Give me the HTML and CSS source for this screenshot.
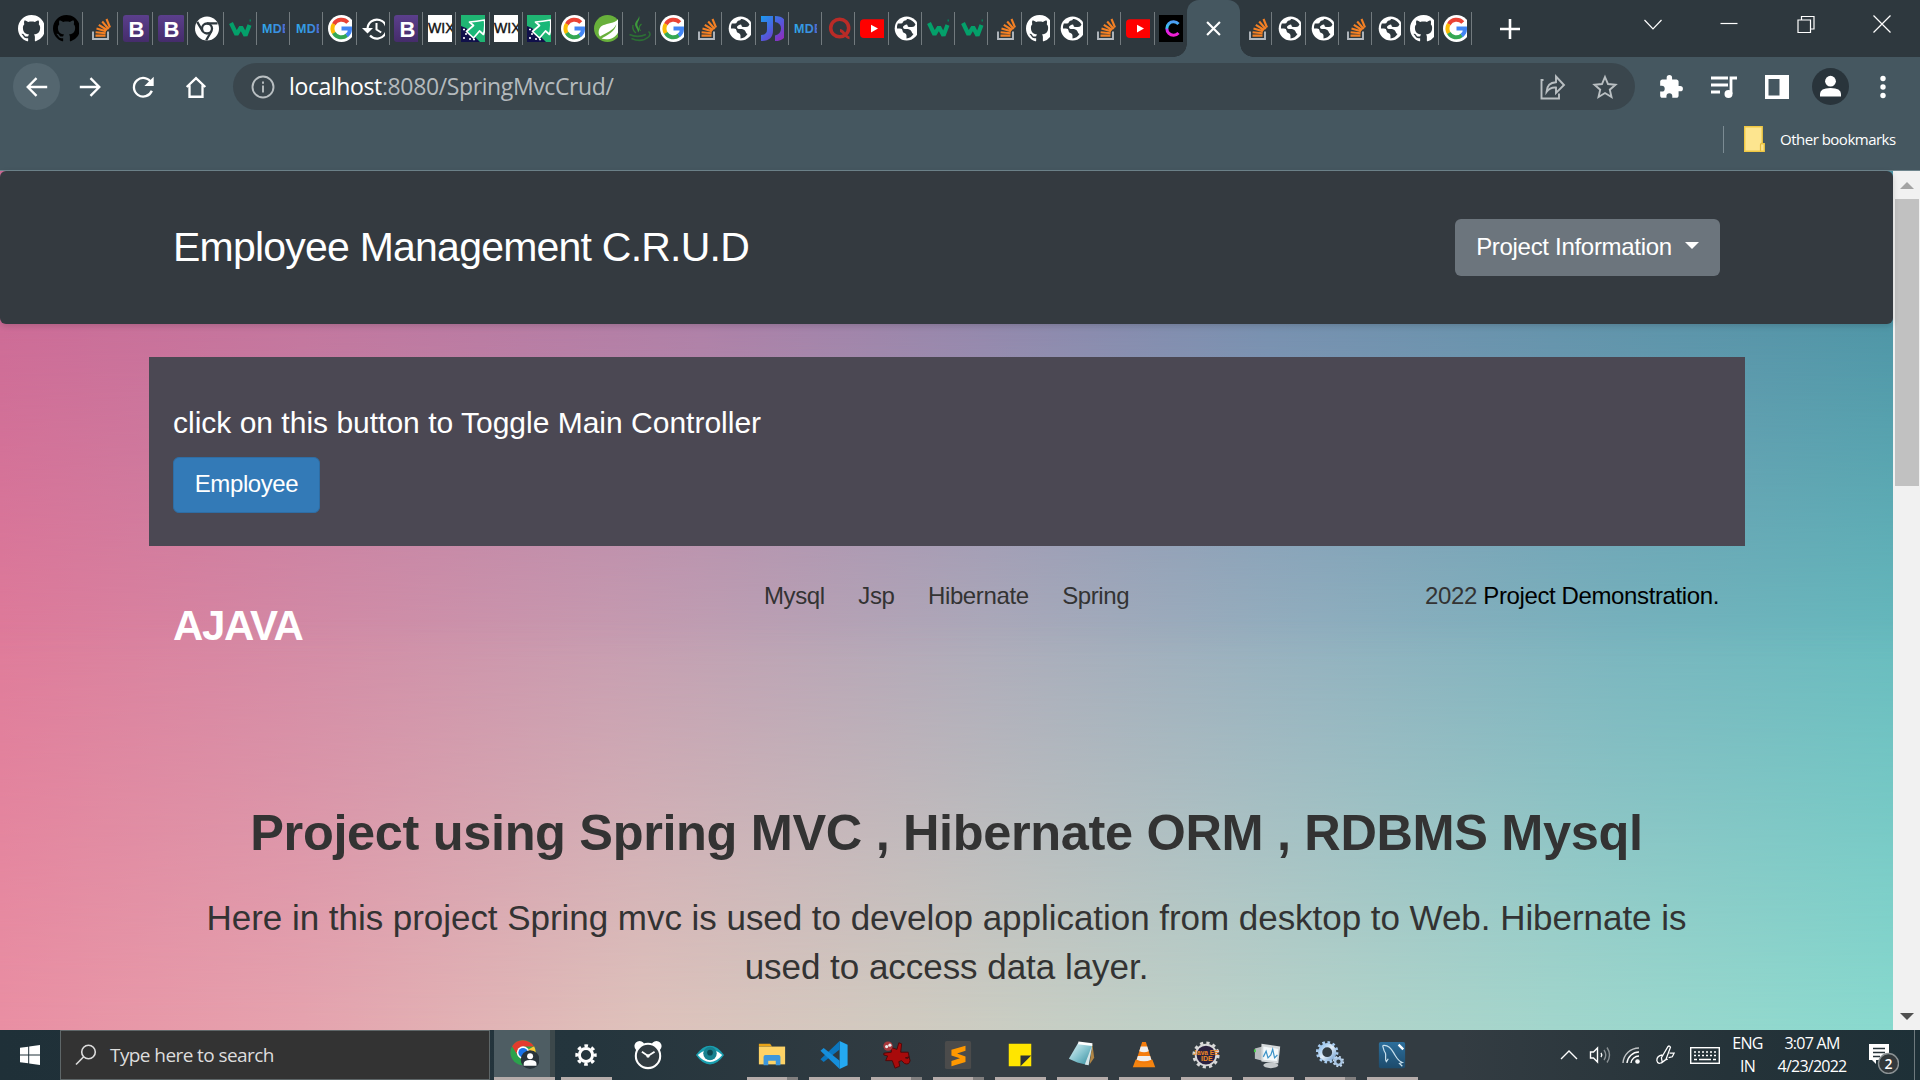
FILE: index.html
```html
<!DOCTYPE html>
<html lang="en">
<head>
<meta charset="utf-8">
<title>Employee Management C.R.U.D</title>
<link rel="stylesheet" href="styles.css">
</head>
<body>
<svg class="sprite" aria-hidden="true">
  <defs>
    <linearGradient id="jd" x1="0" y1="0" x2="1" y2="1"><stop offset="0" stop-color="#1a9bf0"/><stop offset=".55" stop-color="#5a52d8"/><stop offset="1" stop-color="#a31fb0"/></linearGradient>
    <linearGradient id="boot" x1="0" y1="0" x2="0" y2="1"><stop offset="0" stop-color="#5b3f8c"/><stop offset="1" stop-color="#452c6b"/></linearGradient>
    <linearGradient id="cc" x1="0" y1="0" x2="0" y2="1"><stop offset="0" stop-color="#4d9cf5"/><stop offset=".45" stop-color="#35c8f0"/><stop offset=".6" stop-color="#d926f0"/><stop offset="1" stop-color="#f01fd0"/></linearGradient>
    <linearGradient id="mdb" x1="0" y1="0" x2="1" y2="0"><stop offset="0" stop-color="#2fa8e8"/><stop offset=".6" stop-color="#3b8ce0"/><stop offset="1" stop-color="#6a3fc0"/></linearGradient>
    <linearGradient id="glass" x1="0" y1="0" x2="1" y2="1"><stop offset="0" stop-color="#e6f6f8"/><stop offset=".5" stop-color="#86c4cf"/><stop offset="1" stop-color="#2f8799"/></linearGradient>
    <linearGradient id="sea" x1="0" y1="0" x2="0" y2="1"><stop offset="0" stop-color="#2d6f9c"/><stop offset="1" stop-color="#1d4b6c"/></linearGradient>
    <linearGradient id="steel" x1="0" y1="0" x2="1" y2="1"><stop offset="0" stop-color="#8fc0ee"/><stop offset=".5" stop-color="#e3eef8"/><stop offset="1" stop-color="#7ba6d2"/></linearGradient>
  </defs>
  <symbol id="github" viewBox="0 0 16 16"><path d="M8 0C3.58 0 0 3.58 0 8c0 3.54 2.29 6.53 5.47 7.59.4.07.55-.17.55-.38 0-.19-.01-.82-.01-1.49-2.01.37-2.53-.49-2.69-.94-.09-.23-.48-.94-.82-1.13-.28-.15-.68-.52-.01-.53.63-.01 1.08.58 1.23.82.72 1.21 1.87.87 2.33.66.07-.52.28-.87.51-1.07-1.78-.2-3.64-.89-3.64-3.95 0-.87.31-1.59.82-2.15-.08-.2-.36-1.02.08-2.12 0 0 .67-.21 2.2.82.64-.18 1.32-.27 2-.27s1.36.09 2 .27c1.53-1.04 2.2-.82 2.2-.82.44 1.1.16 1.92.08 2.12.51.56.82 1.27.82 2.15 0 3.07-1.87 3.75-3.65 3.95.29.25.54.73.54 1.48 0 1.07-.01 1.93-.01 2.2 0 .21.15.46.55.38A8.01 8.01 0 0 0 16 8c0-4.42-3.58-8-8-8z"/></symbol>
  <symbol id="stack" viewBox="0 0 27 27"><path d="M5 16.500v7.500h15v-7.500" fill="none" stroke="#b3b9bf" stroke-width="1.900"/><path d="M7.500 20.600h10M7.600 17.200l10 1M8.500 13.500l9.500 2.700M10.800 9.800l8.300 5.200M14.200 6.500l6.500 7.500M18.500 4l3.500 8.500" stroke="#f48024" stroke-width="2.100"/></symbol>
  <symbol id="bootstrap" viewBox="0 0 27 27"><rect width="27" height="27" rx="3" fill="url(#boot)"/><text x="5.500" y="21.500" font-family="Liberation Sans, sans-serif" font-weight="bold" font-size="22" fill="#fff">B</text></symbol>
  <symbol id="chromemono" viewBox="0 0 27 27"><circle cx="14" cy="13.500" r="12" fill="#fff"/><circle cx="14" cy="13.500" r="5" fill="none" stroke="#2e383e" stroke-width="2.300"/><path d="M14 8.300h10.500M9.500 16L4.200 6.900M18.500 16l-5.300 9.200" stroke="#2e383e" stroke-width="2.300"/></symbol>
  <symbol id="w3" viewBox="0 0 27 27"><path d="M3 8l5.500 11.500L13 12l4.500 8.500L21.500 10" fill="none" stroke="#04a06a" stroke-width="4.200" stroke-linejoin="bevel"/><path d="M21.500 5.500h1.500M24 5.500h1M24 9h1M24 13h1" stroke="#04805a" stroke-width="2"/></symbol>
  <symbol id="mdbi" viewBox="0 0 27 27"><text x="1" y="18" font-family="Liberation Sans, sans-serif" font-weight="bold" font-size="12.500" textLength="29" fill="url(#mdb)">MDB</text></symbol>
  <symbol id="google" viewBox="0 0 27 27"><circle cx="13.500" cy="13.500" r="13.500" fill="#fff"/><g fill="none" stroke-width="4"><path d="M5.800 9.200A8.700 8.700 0 0 1 19.800 7.500" stroke="#ea4335"/><path d="M5.800 9A9 9 0 0 0 5.900 18.300" stroke="#fbbc05"/><path d="M5.800 18A8.700 8.700 0 0 0 18.900 20.300" stroke="#34a853"/><path d="M18.700 20.500Q22.200 18 22 13.600H13.500" stroke="#4285f4"/></g></symbol>
  <symbol id="history" viewBox="0 0 27 27"><path d="M6.500 14A9.500 9.500 0 1 1 9 20.500" fill="none" stroke="#fff" stroke-width="2.200"/><path d="M1 13h11l-5.500 5.500z" fill="#fff"/><path d="M15.500 8v6.500l4.700 3" fill="none" stroke="#fff" stroke-width="2"/></symbol>
  <symbol id="wix" viewBox="0 0 27 27"><rect width="27" height="27" fill="#fff"/><text x="0" y="18.300" font-family="Liberation Sans, sans-serif" font-size="14.500" textLength="26.500" lengthAdjust="spacingAndGlyphs" fill="#111" stroke="#111" stroke-width=".4">WIX</text></symbol>
  <symbol id="cursor" viewBox="0 0 27 27"><rect width="27" height="27" fill="#1fb573"/><path d="M0 11l5 2 10 10 4 4H0z" fill="#10104a"/><path d="M2 14.500h2M4 19h2M2 23h2M8 24h2M12 24.500h2" stroke="#fff" stroke-width="1.500"/><path d="M8.500 7Q15 6.500 23.500 5q1 8-1 14.500l-4-3.500-6 7-7-6.500 7-6z" fill="#19b878" stroke="#fff" stroke-width="1.700" stroke-linejoin="round"/></symbol>
  <symbol id="spring" viewBox="0 0 27 27"><circle cx="13.500" cy="13.500" r="13.500" fill="#68b03b"/><path d="M24.500 3.500C21 8.500 14 8 9 10.300 4 12.800 3.700 18.500 6 21.500 12 18 19 16 22.500 9 21 17 13 20 7.500 23.500 13 25.500 21 24 24 17.500 26 13 26 8 24.500 3.500z" fill="#fff"/></symbol>
  <symbol id="java" viewBox="0 0 27 27"><path d="M12 1c2 4-3.500 6.500-1 11 1.500 2.500 1.500 4 0 5.500 0-5-5-6-2-11C10.300 4.500 12 3.500 12 1z" fill="#3e9a3c"/><path d="M6 10q-1 5 3 8M14.500 9q-4 3-1 7" fill="none" stroke="#2f7d31" stroke-width="1.200"/><path d="M2.500 19.500q8 3.800 16.500 0M4.500 23.500q10 4.500 17-1.500 3-3 0-5.500" fill="none" stroke="#2c6e35" stroke-width="1.600"/></symbol>
  <symbol id="globe" viewBox="0 0 27 27"><circle cx="13.700" cy="13.500" r="12" fill="#fff"/><path d="M15 4q5 1 7.500 5.500-1 2.500-3.500 2.500h-2.500q-2 0-2-1.500t-2.500-.5-2 2.500 2 1.500h3q3 .5 3.500 2.500t2 2.500q-2.500 4-7 4.500v-3q0-2-2-2.500t-2-2.500-2.500-2H4q-.3-2.500.8-5h3.200q1.500 0 2-1.500t2-1.500 2-1.500z" fill="#2e383e"/></symbol>
  <symbol id="jdoodle" viewBox="0 0 27 27"><path d="M1 1h12v14.500Q13 26 1 26v-6q6 0 6-5.500V7H1zM15 1q12 0 12 12.500T15 26v-5.500q6-1.500 6-7T15 7z" fill="url(#jd)"/></symbol>
  <symbol id="quora" viewBox="0 0 27 27"><ellipse cx="12.700" cy="13" rx="9" ry="8.800" fill="none" stroke="#b92b27" stroke-width="3.600"/><path d="M13 15.500c4 0 5 7.300 9.500 7.300" fill="none" stroke="#b92b27" stroke-width="2.800"/></symbol>
  <symbol id="youtube" viewBox="0 0 27 27"><rect y="4.300" width="27" height="18.700" rx="4" fill="#f00"/><path d="M11 9.800v7.600l7-3.800z" fill="#fff"/></symbol>
  <symbol id="codec" viewBox="0 0 27 27"><rect width="27" height="27" fill="#000"/><path d="M19.500 9A6.700 6.700 0 1 0 19.500 18" fill="none" stroke="url(#cc)" stroke-width="3"/></symbol>
</svg>

<div class="browser">
  <div class="tabstrip">
    <div class="tabs tabs-wide">
      <div class="tab"><span class="fav"><svg fill="#fff"><use href="#github"/></svg></span></div>
      <div class="tab"><span class="fav"><svg fill="#000"><use href="#github"/></svg></span></div>
      <div class="tab"><span class="fav"><svg><use href="#stack"/></svg></span></div>
      <div class="tab"><span class="fav"><svg><use href="#bootstrap"/></svg></span></div>
      <div class="tab"><span class="fav"><svg><use href="#bootstrap"/></svg></span></div>
      <div class="tab"><span class="fav"><svg><use href="#chromemono"/></svg></span></div>
    </div>
    <div class="tabs">
      <div class="tab"><span class="fav"><svg><use href="#w3"/></svg></span></div>
      <div class="tab"><span class="fav"><svg><use href="#mdbi"/></svg></span></div>
      <div class="tab"><span class="fav"><svg><use href="#mdbi"/></svg></span></div>
      <div class="tab"><span class="fav"><svg><use href="#google"/></svg></span></div>
      <div class="tab"><span class="fav"><svg><use href="#history"/></svg></span></div>
      <div class="tab"><span class="fav"><svg><use href="#bootstrap"/></svg></span></div>
      <div class="tab"><span class="fav"><svg><use href="#wix"/></svg></span></div>
      <div class="tab"><span class="fav"><svg><use href="#cursor"/></svg></span></div>
      <div class="tab"><span class="fav"><svg><use href="#wix"/></svg></span></div>
      <div class="tab"><span class="fav"><svg><use href="#cursor"/></svg></span></div>
      <div class="tab"><span class="fav"><svg><use href="#google"/></svg></span></div>
      <div class="tab"><span class="fav"><svg><use href="#spring"/></svg></span></div>
      <div class="tab"><span class="fav"><svg><use href="#java"/></svg></span></div>
      <div class="tab"><span class="fav"><svg><use href="#google"/></svg></span></div>
      <div class="tab"><span class="fav"><svg><use href="#stack"/></svg></span></div>
      <div class="tab"><span class="fav"><svg><use href="#globe"/></svg></span></div>
      <div class="tab"><span class="fav"><svg><use href="#jdoodle"/></svg></span></div>
      <div class="tab"><span class="fav"><svg><use href="#mdbi"/></svg></span></div>
      <div class="tab"><span class="fav"><svg><use href="#quora"/></svg></span></div>
      <div class="tab"><span class="fav"><svg><use href="#youtube"/></svg></span></div>
      <div class="tab"><span class="fav"><svg><use href="#globe"/></svg></span></div>
      <div class="tab"><span class="fav"><svg><use href="#w3"/></svg></span></div>
      <div class="tab"><span class="fav"><svg><use href="#w3"/></svg></span></div>
      <div class="tab"><span class="fav"><svg><use href="#stack"/></svg></span></div>
      <div class="tab"><span class="fav"><svg fill="#fff"><use href="#github"/></svg></span></div>
      <div class="tab"><span class="fav"><svg><use href="#globe"/></svg></span></div>
      <div class="tab"><span class="fav"><svg><use href="#stack"/></svg></span></div>
      <div class="tab"><span class="fav"><svg><use href="#youtube"/></svg></span></div>
      <div class="tab tab-last"><span class="fav"><svg><use href="#codec"/></svg></span></div>
    </div>
    <div class="tab-active"><svg viewBox="0 0 14 14"><path d="M1 1l12 12M13 1L1 13"/></svg></div>
    <div class="tabs tabs-after">
      <div class="tab"><span class="fav"><svg><use href="#stack"/></svg></span></div>
      <div class="tab"><span class="fav"><svg><use href="#globe"/></svg></span></div>
      <div class="tab"><span class="fav"><svg><use href="#globe"/></svg></span></div>
      <div class="tab"><span class="fav"><svg><use href="#stack"/></svg></span></div>
      <div class="tab"><span class="fav"><svg><use href="#globe"/></svg></span></div>
      <div class="tab"><span class="fav"><svg fill="#fff"><use href="#github"/></svg></span></div>
      <div class="tab"><span class="fav"><svg><use href="#google"/></svg></span></div>
    </div>
    <svg class="newtab" viewBox="0 0 20 20"><path d="M10 0v20M0 10h20"/></svg>
    <div class="wincontrols">
      <svg viewBox="0 0 18 18"><path d="M.5 5l8.500 9 8.500-9"/></svg>
      <svg viewBox="0 0 18 18"><path d="M.5 8.500h17"/></svg>
      <svg viewBox="0 0 18 18"><path d="M1 5h12.500v12.500H1zM4.500 5V1.500H17V14h-3.500"/></svg>
      <svg viewBox="0 0 18 18"><path d="M.5 .5l17 17M17.500 .5l-17 17"/></svg>
    </div>
  </div>

  <div class="toolbar">
    <div class="nav">
      <span class="navbtn on"><svg viewBox="0 0 28 28"><path d="M25 14H4M13.500 4.500L4 14l9.500 9.500"/></svg></span>
      <span class="navbtn"><svg viewBox="0 0 28 28"><path d="M3 14h21M14.500 4.500L24 14l-9.500 9.500"/></svg></span>
      <span class="navbtn"><svg viewBox="0 0 28 28"><path d="M23 9.500A10 10 0 1 0 23.500 18"/><path d="M25.500 3v10h-10z" fill="#fff" stroke="none"/></svg></span>
      <span class="navbtn"><svg viewBox="0 0 28 28"><path d="M4 14L14 4.500 24 14M7 12v12.500h14V12"/></svg></span>
    </div>
    <div class="omnibox">
      <svg class="info" viewBox="0 0 24 24"><circle cx="12" cy="12" r="10.500"/><path d="M12 10.500V17.500M12 6.500v2.300"/></svg>
      <span class="url"><b>localhost</b>:8080/SpringMvcCrud/</span>
      <svg class="share" viewBox="0 0 26 26"><path d="M3.500 6H1.500v18.500h17.500v-5"/><path d="M6.500 18q.5-9.500 9.500-9.800V2.500l8 8.500-8 8v-5.500q-6-.5-9.500 4.500z"/></svg>
      <svg class="star" viewBox="0 0 26 26"><path d="M13 3l3 7 7.500.7-5.700 5L19.500 23 13 19l-6.500 4 1.700-7.300-5.700-5L10 10z"/></svg>
    </div>
    <div class="actions">
      <svg viewBox="0 0 24 24"><path fill="#fff" d="M20.500 11H19V7c0-1.100-.9-2-2-2h-4V3.500a2.500 2.500 0 0 0-5 0V5H4c-1.100 0-2 .9-2 2v3.800h1.500a2.700 2.700 0 0 1 0 5.400H2V20c0 1.100.9 2 2 2h3.800v-1.500a2.700 2.700 0 0 1 5.400 0V22H17c1.100 0 2-.9 2-2v-4h1.500a2.500 2.500 0 0 0 0-5z"/></svg>
      <svg viewBox="0 0 26 26"><path d="M0 4h17M0 11h17M0 18h9M20 20V4h6" stroke="#fff" stroke-width="2.800" fill="none"/><circle cx="17.500" cy="20" r="4" fill="#fff"/></svg>
      <svg viewBox="0 0 26 26"><path fill="#fff" fill-rule="evenodd" d="M1 1h24v24H1zM4.500 5v16.500h11V5z"/></svg>
      <svg class="avatar" viewBox="0 0 37 37"><circle cx="18.500" cy="18.500" r="18.500" fill="#29343b"/><circle cx="18.500" cy="13.200" r="5.400" fill="#fff"/><path d="M8 28.500v-2.500q0-6 10.500-6T29 26v2.500z" fill="#fff"/></svg>
      <svg viewBox="0 0 26 26"><g fill="#fff"><circle cx="13" cy="4.500" r="2.700"/><circle cx="13" cy="13" r="2.700"/><circle cx="13" cy="21.500" r="2.700"/></g></svg>
    </div>
  </div>

  <div class="bookmarks">
    <span class="bar"></span>
    <svg viewBox="0 0 21 26"><path d="M.7.700h17.500v17h2v7.500H.700z" fill="#fde58f" stroke="#f0c843" stroke-width="1.400"/><path d="M16.500 25v-6q0-2 2-2" fill="none" stroke="#e5b93a" stroke-width="1.200"/></svg>
    <span class="label">Other bookmarks</span>
  </div>
</div>

<div class="viewport">
  <main class="page">
    <header class="topbar">
      <h2>Employee Management C.R.U.D</h2>
      <button class="btn-info">Project Information<i class="caret"></i></button>
    </header>
    <section class="panel">
      <h4>click on this button to Toggle Main Controller</h4>
      <button class="btn-emp">Employee</button>
    </section>
    <div class="links">
      <h3>AJAVA</h3>
      <nav><a>Mysql</a><a>Jsp</a><a>Hibernate</a><a>Spring</a></nav>
      <p>2022 <a>Project Demonstration.</a></p>
    </div>
    <section class="hero">
      <h1>Project using Spring MVC , Hibernate ORM , RDBMS Mysql</h1>
      <p>Here in this project Spring mvc is used to develop application from desktop to Web. Hibernate is<br>used to access data layer.</p>
    </section>
  </main>
  <div class="scrollbar"><i class="up"></i><i class="thumb"></i><i class="down"></i></div>
</div>

<footer class="taskbar">
  <div class="start"><svg viewBox="0 0 20 20"><path d="M0 2.800l8.200-1.100v7.800H0zM9.200 1.500L20 0v9.500H9.200zM0 10.500h8.200v7.800L0 17.200zM9.200 10.500H20V20L9.200 18.500z" fill="#fff"/></svg></div>
  <div class="search"><svg viewBox="0 0 22 22"><circle cx="13.500" cy="8" r="6.800"/><path d="M8.700 12.800L1 20.500"/></svg><span>Type here to search</span></div>
  <div class="apps">
    <div class="app current"><svg viewBox="0 0 32 32"><circle cx="15" cy="14.500" r="13.500" fill="#2ba24c"/><path d="M26.700 7.800A13.500 13.500 0 0 1 16 28l-1-13.500z" fill="#fcc934"/><path d="M3.300 7.800L9 17l6-9h11.700q-4-6.500-12-6.700Q7 1.500 3.300 7.800z" fill="#e33b2e"/><circle cx="15" cy="14.500" r="6.700" fill="#fff"/><circle cx="15" cy="14.500" r="5" fill="#1a73e8"/><circle cx="22.500" cy="22" r="10" fill="#29343b"/><circle cx="22.500" cy="18.500" r="3.200" fill="#fff"/><path d="M15.700 28.500v-2q0-4 6.800-4t6.800 4v2z" fill="#fff"/></svg></div>
    <div class="app open"><svg viewBox="0 0 32 32"><circle cx="16" cy="16" r="7" fill="none" stroke="#fff" stroke-width="3.200"/><circle cx="16" cy="16" r="9.800" fill="none" stroke="#fff" stroke-width="3.200" stroke-dasharray="3.848 3.848" stroke-dashoffset="2"/></svg></div>
    <div class="app"><svg viewBox="0 0 32 32"><circle cx="7" cy="6.500" r="5.500" fill="#fff"/><circle cx="25" cy="6.500" r="5.500" fill="#fff"/><circle cx="16" cy="17" r="13" fill="#323c42" stroke="#fff" stroke-width="2.200"/><path d="M9.500 12.500L16 17l7-4.500" fill="none" stroke="#fff" stroke-width="2"/><circle cx="16" cy="17" r="1.800" fill="#fff"/></svg></div>
    <div class="app"><svg viewBox="0 0 32 32"><path d="M1 16Q8 6 16 6t15 10q-7 10-15 10T1 16z" fill="#1a9fb0"/><path d="M3 16q6-6 13-6t13 6q-6 7.500-13 7.500T3 16z" fill="#fff"/><circle cx="16" cy="14.500" r="7.200" fill="#17818f"/><circle cx="16" cy="13.500" r="3" fill="#0c4852"/></svg></div>
    <div class="app open more"><svg viewBox="0 0 32 32"><path d="M2 4h12l2 3H2z" fill="#e8a317"/><path d="M2 7h28v19H2z" fill="#fdd266"/><path d="M7 27v-9q0-2 2-2h14q2 0 2 2v9h-5v-5h-8v5z" fill="#3c96dc"/></svg></div>
    <div class="app open"><svg viewBox="0 0 32 32"><path d="M22 1l8.500 4v22L22 31z" fill="#24a9f2"/><path d="M22 1v9L5 23.500l-3.500-3z" fill="#0b76bf"/><path d="M22 31v-9L5 8.500l-3.500 3z" fill="#168fdc"/></svg></div>
    <div class="app open more"><svg viewBox="0 0 32 32"><path d="M3 14l8-1V8l6 2 2-7 3 1-1 9 8 0 1 5-4 1q3 2 4-1l1 4q-1 5-6 3l-3-3-3 1 1 5-5 2-3-8H5l2-5-4-1z" fill="#a80b0b" stroke="#4e0808"/><circle cx="7.500" cy="6.500" r="5" fill="#a8393d"/><circle cx="6" cy="7" r="1.700" fill="#eee"/><circle cx="9.500" cy="5.500" r="1.700" fill="#eee"/></svg></div>
    <div class="app open more"><svg viewBox="0 0 32 32"><rect x="2" y="1" width="28" height="30" rx="2" fill="#4b4b4b"/><path d="M24 6L9 10.500v6l9 3-9 3V28l15-4.500v-6l-9-3 9-3z" fill="#ff9800"/></svg></div>
    <div class="app open"><svg viewBox="0 0 32 32"><path d="M4 4h24v24H4z" fill="#ffe500"/><path d="M16.500 28V16.500H28z" fill="#2b3235"/></svg></div>
    <div class="app open"><svg viewBox="0 0 32 32"><path d="M27 4l2 15-5 7z" fill="#b08545"/><path d="M12 3l15 2-4 22-12-3L2 20z" fill="url(#glass)"/><path d="M12 3l15 2" stroke="#fff" stroke-width="3"/><path d="M27 5l-4 22-4-1z" fill="#d5e5e8"/></svg></div>
    <div class="app open"><svg viewBox="0 0 32 32"><path d="M4 29l3-8h18l3 8z" fill="#f58410"/><path d="M14 2h4l6.500 21q-8.500 4-17 0z" fill="#f47c0c"/><path d="M12.500 7h7l1.600 5q-5 2-10.200 0zM9.400 17h13.200l1.300 4q-8 3.500-15.800 0z" fill="#eee"/></svg></div>
    <div class="app open"><svg viewBox="0 0 32 32"><circle cx="16" cy="16" r="11" fill="#2b2140" stroke="#d8d8d8" stroke-width="2"/><circle cx="16" cy="16" r="13" fill="none" stroke="#d8d8d8" stroke-width="3" stroke-dasharray="3.400 3.407"/><text x="16" y="15.500" text-anchor="middle" textLength="27" lengthAdjust="spacingAndGlyphs" font-family="Liberation Sans, sans-serif" font-weight="bold" font-size="8" fill="#f08a24">Java EE</text><text x="17" y="22.500" text-anchor="middle" font-family="Liberation Sans, sans-serif" font-weight="bold" font-size="7.500" fill="#f08a24">IDE</text></svg></div>
    <div class="app open"><svg viewBox="0 0 32 32"><path d="M2 9l8-2v15l-8-2z" fill="#b9bdbf"/><path d="M2 10v3" stroke="#4c4" stroke-width="2"/><ellipse cx="19" cy="27" rx="8" ry="3" fill="#c5c9cb"/><path d="M9 4l20 3-2 18-18-2z" fill="#d6dadc"/><path d="M11 7l16 2.500-1.500 13-14.500-1.500z" fill="#f4f9fb"/><path d="M11 18l3-6 2 7 3-3 2-6 2 9 3-3" fill="none" stroke="#3c93c8" stroke-width="1.300"/></svg></div>
    <div class="app open more"><svg viewBox="0 0 32 32"><circle cx="13" cy="13" r="7.500" fill="none" stroke="url(#steel)" stroke-width="4.500"/><circle cx="13" cy="13" r="10.500" fill="none" stroke="#a8cbee" stroke-width="3" stroke-dasharray="2.750 2.748"/><circle cx="25" cy="23" r="3.500" fill="none" stroke="#a9c6e4" stroke-width="2.500"/><circle cx="25" cy="23" r="5.200" fill="none" stroke="#c4daf0" stroke-width="1.800" stroke-dasharray="2.040 2.044"/></svg></div>
    <div class="app open"><svg viewBox="0 0 32 32"><rect x="2" y="2" width="28" height="28" rx="2" fill="url(#sea)"/><path d="M6 6c6-1 9 3 12 8s4 8 9 10l-3 1 3 3M6 6c1 3 1 6 3 8 1 4-1 6 1 9l2-3" fill="none" stroke="#c7dfec" stroke-width="1.300"/><path d="M23 5l5 5" stroke="#fff" stroke-width="2.500"/></svg></div>
  </div>
  <div class="tray">
    <svg viewBox="0 0 18 18"><path d="M1 13l8-8 8 8"/></svg>
    <svg class="wide" viewBox="0 0 22 20"><path d="M1.500 7v6h3l4 4V3l-4 4z"/><path d="M12 8q1.500 2 0 4"/><path d="M15 5q3.500 5 0 10M18 2.500q5 7.500 0 15" opacity=".45"/></svg>
    <svg class="wifi" viewBox="0 0 18 18"><path d="M1 17A16 16 0 0 1 17 2" opacity=".7"/><path d="M5 17A12 12 0 0 1 17 6M9 17a8 8 0 0 1 8-7"/><circle cx="15.500" cy="15.500" r="1.600" fill="#fff"/></svg>
    <svg class="wide pen" viewBox="0 0 22 22"><path d="M7 14L14 2q2-2 3 .5L12 16l-4 3zM8 11q-6 1-6 6 1 5 6 2 4-4 6-3M16 9h5l-2 4-4 1"/></svg>
    <svg class="kbd" viewBox="0 0 30 17"><rect x=".7" y=".7" width="28.600" height="15.600"/><path d="M4 5h22M4 8.500h22" stroke-dasharray="2 2"/><path d="M4 12.500h3M9 12.500h12M23 12.500h3"/></svg>
    <div class="two lang"><span>ENG</span><span>IN</span></div>
    <div class="two clock"><span>3:07 AM</span><span>4/23/2022</span></div>
    <svg class="note" viewBox="0 0 30 30"><path d="M0 0h20v16H7v4l-4-4H0z" fill="#fff" stroke="none"/><path d="M4 4.500h12M4 8.500h12M4 12.500h7" stroke="#263238"/><circle cx="19.500" cy="19.500" r="10" fill="#33393c" stroke="#8b9294"/><text x="19.500" y="24.500" text-anchor="middle" font-family="Open Sans, sans-serif" font-weight="600" font-size="14" fill="#fff" stroke="none">2</text></svg>
  </div>
</footer>
</body>
</html>
```
FILE: styles.css
```css
* { box-sizing: border-box; }
body {
  margin: 0;
  width: 1920px;
  height: 1080px;
  overflow: hidden;
  display: flex;
  flex-direction: column;
  font-family: "Liberation Sans", Arial, sans-serif;
}
h1, h2, h3, h4, p { margin: 0; font-weight: 400; }
button { border: 0; font: inherit; color: #fff; padding: 0; }
svg { display: block; flex: none; }
.sprite { position: absolute; width: 0; height: 0; }

/* Browser chrome */
.browser { height: 171px; flex: none; background: #455760; border-bottom: 1px solid #6f858d; }
.tabstrip { height: 57px; background: #2e383e; display: flex; align-items: center; padding-left: 13px; }
.tabs { display: flex; height: 57px; align-items: center; }
.tab {
  width: 33.250px;
  height: 33px;
  display: flex;
  align-items: center;
  padding-left: 4.500px;
  border-right: 1px solid #727a7e;
}
.tabs-wide .tab { width: 35.100px; }
.tab-last { border-right: 0; }
.fav { width: 24px; height: 27px; overflow: hidden; display: block; }
.tabs-wide .fav { width: 26px; }
.fav svg { width: 27px; height: 27px; }
.tab-active {
  width: 53px;
  height: 57px;
  margin-left: -1px;
  background: #455760;
  border-radius: 12px 12px 0 0;
  display: flex;
  align-items: center;
  justify-content: center;
  position: relative;
}
.tab-active::before, .tab-active::after {
  content: "";
  position: absolute;
  bottom: 0;
  width: 13px;
  height: 13px;
}
.tab-active::before { left: -13px; background: radial-gradient(circle at 0 0, #2e383e 12.500px, #455760 13px); }
.tab-active::after { right: -13px; background: radial-gradient(circle at 100% 0, #2e383e 12.500px, #455760 13px); }
.tab-active svg { width: 15px; height: 15px; fill: none; stroke: #fff; stroke-width: 2; }
.tabs-after .tab:first-child { width: 32.500px; padding-left: 5px; }
.newtab { width: 20px; height: 20px; margin-left: 28px; fill: none; stroke: #fff; stroke-width: 2.600; }
.wincontrols { display: flex; gap: 58.500px; margin-left: auto; padding-right: 29px; margin-bottom: 9px; }
.wincontrols svg { width: 18px; height: 18px; fill: none; stroke: #fff; stroke-width: 1.200; }

.toolbar { height: 59px; display: flex; align-items: center; padding-left: 13px; }
.nav { display: flex; gap: 6px; flex: none; }
.navbtn { width: 47px; height: 47px; border-radius: 50%; display: grid; place-items: center; }
.navbtn.on { background: #54666f; }
.navbtn svg { width: 26px; height: 26px; fill: none; stroke: #fff; stroke-width: 2.500; }
.omnibox {
  width: 1402px;
  height: 47px;
  flex: none;
  margin-left: 14px;
  border-radius: 24px;
  background: #3a464d;
  display: flex;
  align-items: center;
  padding: 0 17px 0 18px;
}
.omnibox svg { fill: none; stroke: #b9bfc2; stroke-width: 1.900; }
.info { width: 24px; height: 24px; }
.url { margin-left: 14px; font: 23px/47px "Open Sans", sans-serif; letter-spacing: -.38px; color: #b4babd; margin-right: auto; white-space: nowrap; }
.url b { font-weight: 400; color: #fff; }
.share { width: 26px; height: 26px; margin-right: 26px; }
.star { width: 26px; height: 26px; }
.actions { display: flex; align-items: center; flex: none; padding-left: 23px; }
.actions svg { width: 26px; height: 26px; margin-right: 27px; }
.actions .avatar { width: 37px; height: 37px; margin: 0 21px 0 -5px; }
.actions svg:last-child { margin-right: 0; }

.bookmarks { height: 46px; display: flex; align-items: center; justify-content: flex-end; padding-right: 24px; }
.bookmarks .bar { width: 1px; height: 27px; background: #7b8b93; margin-right: 20px; }
.bookmarks svg { width: 21px; height: 26px; margin-right: 15px; }
.bookmarks .label { font: 15px/20px "Open Sans", sans-serif; letter-spacing: -.5px; color: #fff; width: 116px; white-space: nowrap; }

/* Web page */
.viewport { height: 859px; flex: none; display: flex; }
.page {
  width: 1893px;
  position: relative;
  color: #333;
  background: linear-gradient(90deg, #cd6c97 0, #c3779f 16%, #af80a8 37%, #9488ad 52%, #7890b0 67%, #6593ac 82%, #4f96a7 100%);
  isolation: isolate;
}
.page::before, .page::after { content: ""; position: absolute; inset: 0; z-index: -1; }
.page::before {
  background: linear-gradient(90deg, #df7b9a 0, #d589a4 14%, #c79cb0 32%, #adabba 52%, #93b0bf 69%, #78b4be 86%, #67bbbe 100%);
  -webkit-mask-image: linear-gradient(180deg, transparent 17%, #000 57%);
  mask-image: linear-gradient(180deg, transparent 17%, #000 57%);
}
.page::after {
  background: linear-gradient(90deg, #e98fa3 0, #e5a3ae 16%, #dec2bb 34%, #d0cbc0 48%, #bcd1c8 64%, #a2d6cc 82%, #88d9ce 100%);
  -webkit-mask-image: linear-gradient(180deg, transparent 52%, #000 100%);
  mask-image: linear-gradient(180deg, transparent 52%, #000 100%);
}
.topbar {
  height: 153px;
  padding: 0 173px 0 173px;
  background: #343a40;
  border-radius: 6px;
  box-shadow: 0 2px 6px rgba(0, 0, 0, .15);
  display: flex;
  align-items: center;
  justify-content: space-between;
  color: #fff;
}
.topbar h2 { font-size: 41px; line-height: 50px; letter-spacing: -.78px; margin-bottom: 2px; white-space: nowrap; }
.btn-info { width: 265px; height: 57px; border-radius: 6px; background: #6c757d; font-size: 24px; letter-spacing: -.3px; padding-bottom: 2px; display: flex; align-items: center; justify-content: center; }
.caret { border: 7px solid transparent; border-top-color: #fff; border-bottom: 0; margin-left: 13px; margin-bottom: 2px; }
.panel { margin: 33px 148px 0 149px; height: 189px; background: #4b4853; padding: 48px 24px 0; color: #fff; }
.panel h4 { font-size: 30px; line-height: 36px; margin-bottom: 16px; }
.btn-emp { width: 147px; height: 56px; border-radius: 6px; border: 1px solid #2e6da4; background: #337ab7; font-size: 24px; letter-spacing: -.4px; padding-bottom: 2px; }
.links { display: grid; grid-template-columns: 591px 1fr auto; padding: 33px 174px 0 173px; height: 202px; font-size: 24px; line-height: 34px; letter-spacing: -.38px; align-items: start; }
.links h3 { color: #fff; font-size: 42px; line-height: 48px; font-weight: 700; letter-spacing: -1.300px; margin-top: 23px; }
.links nav { display: flex; gap: 33.500px; }
.links p a { color: #000; }
.hero { text-align: center; }
.hero h1 { font-size: 50.500px; line-height: 60px; font-weight: 700; letter-spacing: -.35px; margin-top: 55px; white-space: nowrap; }
.hero p { font-size: 35px; line-height: 49px; letter-spacing: -.04px; margin-top: 30px; white-space: nowrap; }

.scrollbar { width: 27px; background: #f1f1f1; display: flex; flex-direction: column; align-items: center; padding: 11px 0 10px; }
.scrollbar .up { border: 7px solid transparent; border-bottom-color: #a3a3a3; border-top: 0; }
.scrollbar .thumb { width: 24px; height: 287px; background: #c1c1c1; margin-top: 10px; }
.scrollbar .down { border: 7px solid transparent; border-top-color: #505050; border-bottom: 0; margin-top: auto; }

/* Taskbar */
.taskbar { height: 50px; flex: none; display: flex; background: linear-gradient(90deg, #1f3038, #24353d 30%, #333c42 50%, #333c42 76%, #253339 90%, #1e3037); }
.start { width: 60px; display: grid; place-items: center; }
.start svg { width: 20px; height: 20px; }
.search { width: 430px; background: #333; border: 1px solid #5e6668; display: flex; align-items: center; padding-left: 14px; }
.search svg { width: 22px; height: 22px; fill: none; stroke: #ddd; stroke-width: 1.600; }
.search span { margin-left: 13px; font: 19px/26px "Open Sans", sans-serif; letter-spacing: -.58px; color: #ddd; white-space: nowrap; }
.apps { display: flex; padding-left: 4px; }
.app { width: 62px; height: 50px; display: grid; place-items: center; position: relative; }
.app svg { width: 30px; height: 30px; }
.app.current { background: linear-gradient(90deg, #4e5d63 56px, #3c484b 56px); border-bottom: 3px solid #b5acaa; width: 61px; padding-right: 1px; }
.app.open::after { content: ""; position: absolute; left: 6px; bottom: 0; width: 51px; height: 3px; background: #b5acaa; }
.app.more::after { background: linear-gradient(90deg, #b5acaa 40px, #817f7f 40px); }
.tray { margin-left: auto; display: flex; align-items: center; padding-right: 5px; color: #fff; }
.tray svg { width: 18px; height: 18px; fill: none; stroke: #fff; stroke-width: 1.400; margin-right: 11px; }
.tray .wide { width: 22px; height: 20px; }
.tray .kbd { width: 30px; height: 17px; margin-right: 11px; }
.tray .pen { margin-left: 3px; margin-right: 14px; }
.two { display: flex; flex-direction: column; align-items: center; font: 16px/23px "Open Sans", sans-serif; letter-spacing: -.75px; }
.lang { width: 33px; }
.clock { width: 74px; margin: 0 20px 0 11px; }
.tray .note { width: 30px; height: 30px; margin: 0 15px 0 0; position: relative; top: 4px; }
.tray::after { content: ""; width: 1px; height: 50px; background: #6e797d; }
```
